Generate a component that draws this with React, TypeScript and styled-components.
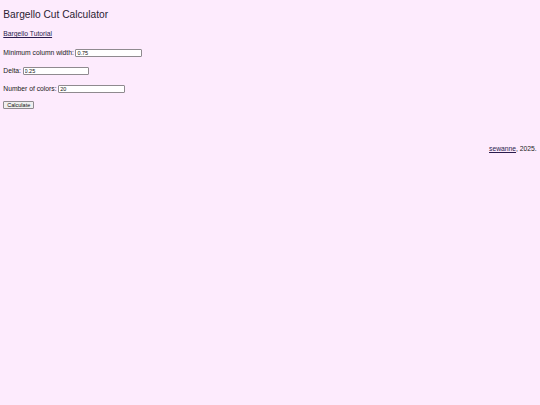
import React from "react";
import styled, { createGlobalStyle } from "styled-components";

const GlobalStyle = createGlobalStyle`
  html, body {
    margin: 0;
    padding: 0;
    background: #fdebfd;
  }
  body {
    font-family: "Liberation Sans", Arial, sans-serif;
    font-size: 6.75px;
    color: #222;
  }
`;

const Page = styled.div`
  min-height: 405px;
  padding: 0 3.3px;
  display: flex;
  flex-direction: column;
`;

const Title = styled.h2`
  margin: 9px 0 0;
  font-size: 10.2px;
  font-weight: normal;
  line-height: 12px;
  color: #2b2233;
`;

const LinkLine = styled.div`
  margin-top: 9px;
  line-height: 8px;
`;

const TutorialLink = styled.a`
  color: #2a1b4d;
  text-decoration: underline;
`;

const Form = styled.form`
  margin-top: 10.5px;
  display: flex;
  flex-direction: column;
  align-items: flex-start;
  gap: 10.4px;
`;

const Row = styled.label`
  display: flex;
  align-items: center;
  gap: 1.6px;
  height: 8px;
  line-height: 8px;
`;

const Field = styled.input`
  box-sizing: border-box;
  width: 66.5px;
  height: 8px;
  margin: 0;
  padding: 0 1px;
  border: 0.6px solid #8f8a8f;
  border-radius: 1px;
  background: #fff;
  font-family: "Liberation Sans", Arial, sans-serif;
  font-size: 5.5px;
  color: #111;
  outline: none;
`;

const Button = styled.button`
  box-sizing: border-box;
  margin-top: -3px;
  height: 8.6px;
  padding: 0 3px;
  border: 0.6px solid #8f8a8f;
  border-radius: 1px;
  background: #efefef;
  font-family: "Liberation Sans", Arial, sans-serif;
  font-size: 5.5px;
  line-height: 6px;
  color: #111;
`;

const Footer = styled.footer`
  margin-top: 36px;
  text-align: right;
  line-height: 8px;
  color: #222;
`;

const FooterLink = styled.a`
  color: #2a1b4d;
  text-decoration: underline;
`;

const fields = [
  { label: "Minimum column width:", value: "0.75" },
  { label: "Delta:", value: "0.25" },
  { label: "Number of colors:", value: "20" },
];

export default function App() {
  return (
    <>
      <GlobalStyle />
      <Page>
        <Title>Bargello Cut Calculator</Title>
        <LinkLine>
          <TutorialLink href="#">Bargello Tutorial</TutorialLink>
        </LinkLine>
        <Form onSubmit={(e) => e.preventDefault()}>
          {fields.map((f) => (
            <Row key={f.label}>
              {f.label}
              <Field type="text" defaultValue={f.value} />
            </Row>
          ))}
          <Button type="submit">Calculate</Button>
        </Form>
        <Footer>
          <FooterLink href="#">sewanne</FooterLink>, 2025.
        </Footer>
      </Page>
    </>
  );
}
